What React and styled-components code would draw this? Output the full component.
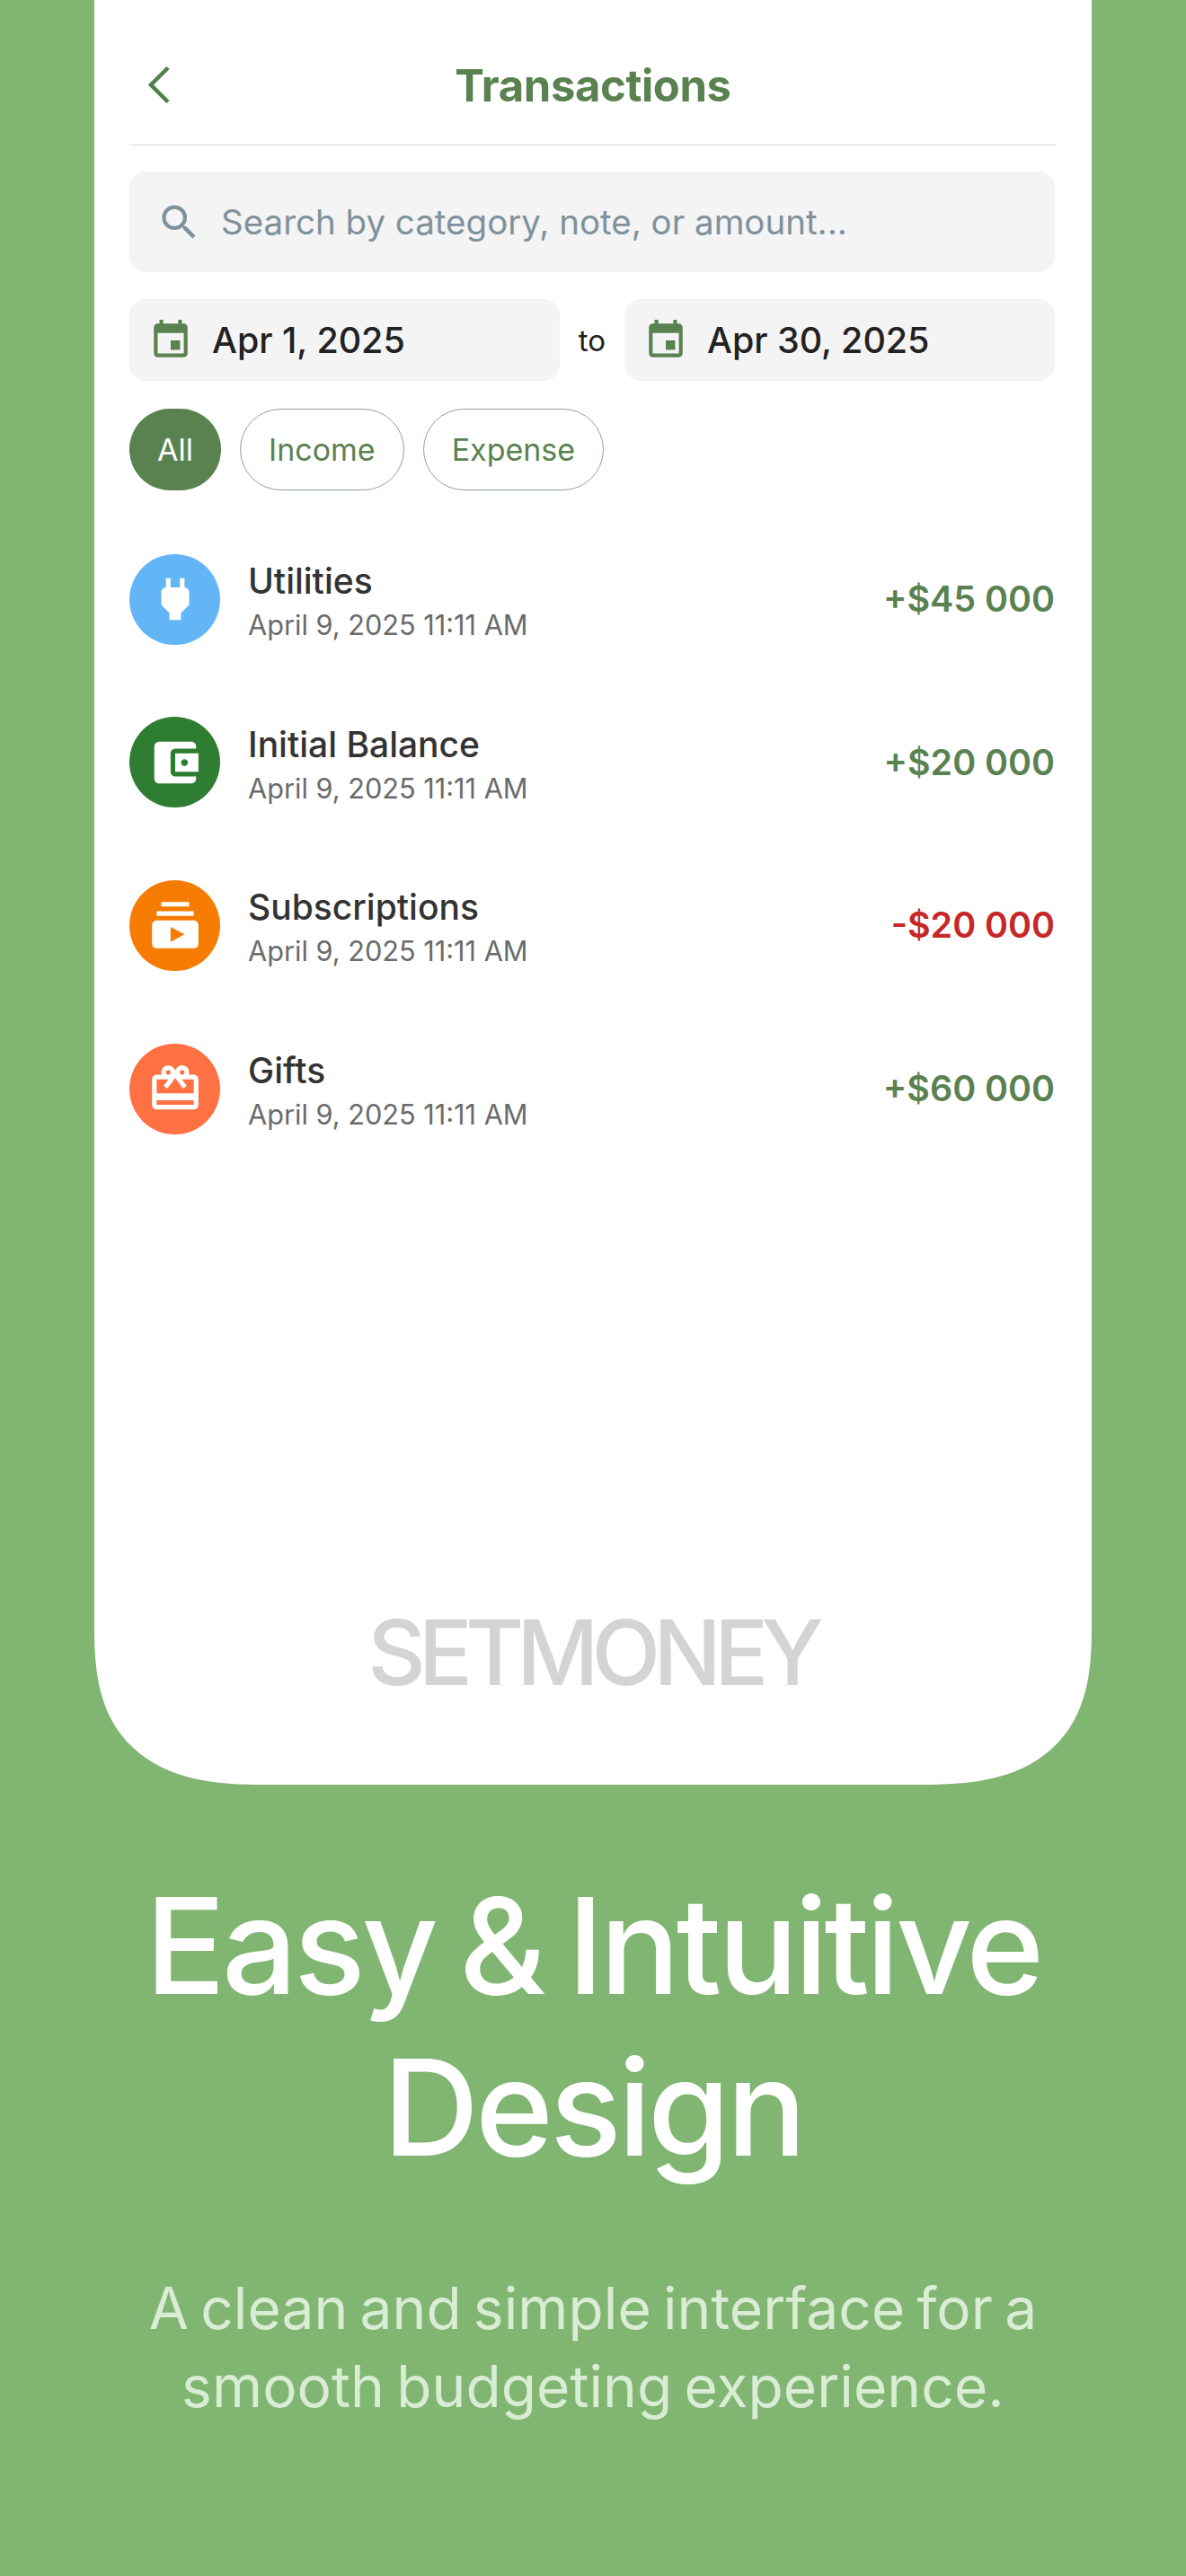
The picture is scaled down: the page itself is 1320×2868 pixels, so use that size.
import React from "react";
import styled, { createGlobalStyle } from "styled-components";
import { MdSearch, MdEvent, MdPower, MdAccountBalanceWallet, MdSubscriptions, MdCardGiftcard } from "react-icons/md";

const Global = createGlobalStyle`
  html, body { margin: 0; padding: 0; background: #81b572; }
  * { box-sizing: border-box; }
`;
const Page = styled.div`
  width: 1320px; height: 2868px; background: #81b572; overflow: hidden;
  font-family: Inter, "Liberation Sans", sans-serif;
  display: flex; flex-direction: column; align-items: center;
`;
const Card = styled.main`
  width: 1110px; height: 1987px; background: #fff; flex: none;
  border-radius: 0 0 190px 190px / 0 0 175px 175px; corner-shape: superellipse(1.4); padding: 0 41px 0 39px;
  display: flex; flex-direction: column;
`;
const Header = styled.header`
  height: 162px; margin-right: -2px; border-bottom: 2px solid #ececec; flex: none;
  display: flex; align-items: center; justify-content: center; position: relative;
`;
const Back = styled.button`
  position: absolute; left: 21px; top: 74px; border: 0; background: none; padding: 0; display: flex;
`;
const Title = styled.h1`
  margin: 0; font-size: 49px; font-weight: 700; color: #5a8250; letter-spacing: -0.4px; line-height: 1;
  transform: translateY(15px);
`;
const Search = styled.div`
  height: 112px; margin-top: 29px; border-radius: 18px; background: #f4f4f4;
  display: flex; align-items: center; padding-left: 30px; gap: 21px; flex: none;
`;
const Placeholder = styled.span`
  font-size: 38.5px; color: #7f919c;
`;
const DateRow = styled.div`
  display: flex; align-items: center; margin-top: 30px; height: 91px; flex: none;
`;
const DateBox = styled.div`
  width: 479px; height: 91px; border-radius: 18px; background: #f4f4f4; flex: none;
  display: flex; align-items: center; padding-left: 21px; gap: 21px;
  font-size: 39.4px; font-weight: 500; color: #222;
`;
const To = styled.span`
  flex: 1; text-align: center; font-size: 33px; color: #222;
`;
const Chips = styled.div`
  display: flex; gap: 21px; margin-top: 31px; flex: none;
`;
const Chip = styled.div`
  border-radius: 46px; padding: 0 31px; min-width: 102px; height: 91px;
  display: flex; align-items: center; justify-content: center;
  font-size: 34px; line-height: 1;
  color: ${p => (p.$active ? "#fff" : "#5a8250")};
  background: ${p => (p.$active ? "#5a8250" : "#fff")};
  border: ${p => (p.$active ? "0" : "1.5px solid #8fa58b")};
`;
const List = styled.div`
  display: flex; flex-direction: column; gap: 81.7px; margin-top: 71px; flex: none;
`;
const Row = styled.div`
  display: flex; align-items: center; height: 100px;
`;
const IconCircle = styled.div`
  width: 101px; height: 101px; border-radius: 50%; background: ${p => p.$bg}; flex: none;
  display: flex; align-items: center; justify-content: center; color: #fff;
`;
const Info = styled.div`
  flex: 1; margin-left: 31px; padding-top: 4px; display: flex; flex-direction: column; gap: 8px;
`;
const Name = styled.div`
  font-size: 39px; font-weight: 500; color: #333; line-height: 46px;
`;
const Stamp = styled.div`
  font-size: 30.7px; color: #6b6b6b; line-height: 36px;
`;
const Amount = styled.div`
  font-size: 39.4px; font-weight: 600; color: ${p => p.$c};
`;
const Logo = styled.div`
  margin-top: auto; margin-bottom: 97px; text-align: center;
  font-size: 100px; font-weight: 500; letter-spacing: -8px; line-height: 100px; color: #d4d4d4;
`;
const Headline = styled.h2`
  margin: 0; margin-top: 90px; width: 100%; text-align: center; color: #fff;
  font-size: 148px; font-weight: 500; line-height: 180px; letter-spacing: -4px; word-spacing: -8px;
`;
const Sub = styled.p`
  margin: 0; margin-top: 89px; text-align: center; color: #d9ecd4;
  font-size: 64px; font-weight: 400; line-height: 87px; letter-spacing: 0.1px; word-spacing: -5px;
`;

const rows = [
  { n: "Utilities", a: "+$45 000", bg: "#64b5f6", I: MdPower, c: "#5a8250" },
  { n: "Initial Balance", a: "+$20 000", bg: "#2e7d32", I: MdAccountBalanceWallet, c: "#5a8250" },
  { n: "Subscriptions", a: "-$20 000", bg: "#f57c00", I: MdSubscriptions, c: "#c62828" },
  { n: "Gifts", a: "+$60 000", bg: "#ff7043", I: MdCardGiftcard, c: "#5a8250" },
];

export default function App() {
  return (
    <Page>
      <Global />
      <Card>
        <Header>
          <Back aria-label="Back">
            <svg width="24" height="41" viewBox="0 0 24 41" fill="none">
              <path d="M22 1.5 L3 20.5 L22 39.5" stroke="#4f8149" strokeWidth="4.5" />
            </svg>
          </Back>
          <Title>Transactions</Title>
        </Header>
        <Search>
          <MdSearch size={51} color="#7f919c" />
          <Placeholder>Search by category, note, or amount...</Placeholder>
        </Search>
        <DateRow>
          <DateBox><MdEvent size={50} color="#5a8250" />Apr 1, 2025</DateBox>
          <To>to</To>
          <DateBox><MdEvent size={50} color="#5a8250" />Apr 30, 2025</DateBox>
        </DateRow>
        <Chips>
          <Chip $active>All</Chip>
          <Chip>Income</Chip>
          <Chip>Expense</Chip>
        </Chips>
        <List>
          {rows.map(r => (
            <Row key={r.n}>
              <IconCircle $bg={r.bg}><r.I size={62} /></IconCircle>
              <Info>
                <Name>{r.n}</Name>
                <Stamp>April 9, 2025 11:11 AM</Stamp>
              </Info>
              <Amount $c={r.c}>{r.a}</Amount>
            </Row>
          ))}
        </List>
        <Logo>SETMONEY</Logo>
      </Card>
      <Headline>Easy &amp; Intuitive<br />Design</Headline>
      <Sub>A clean and simple interface for a<br />smooth budgeting experience.</Sub>
    </Page>
  );
}
